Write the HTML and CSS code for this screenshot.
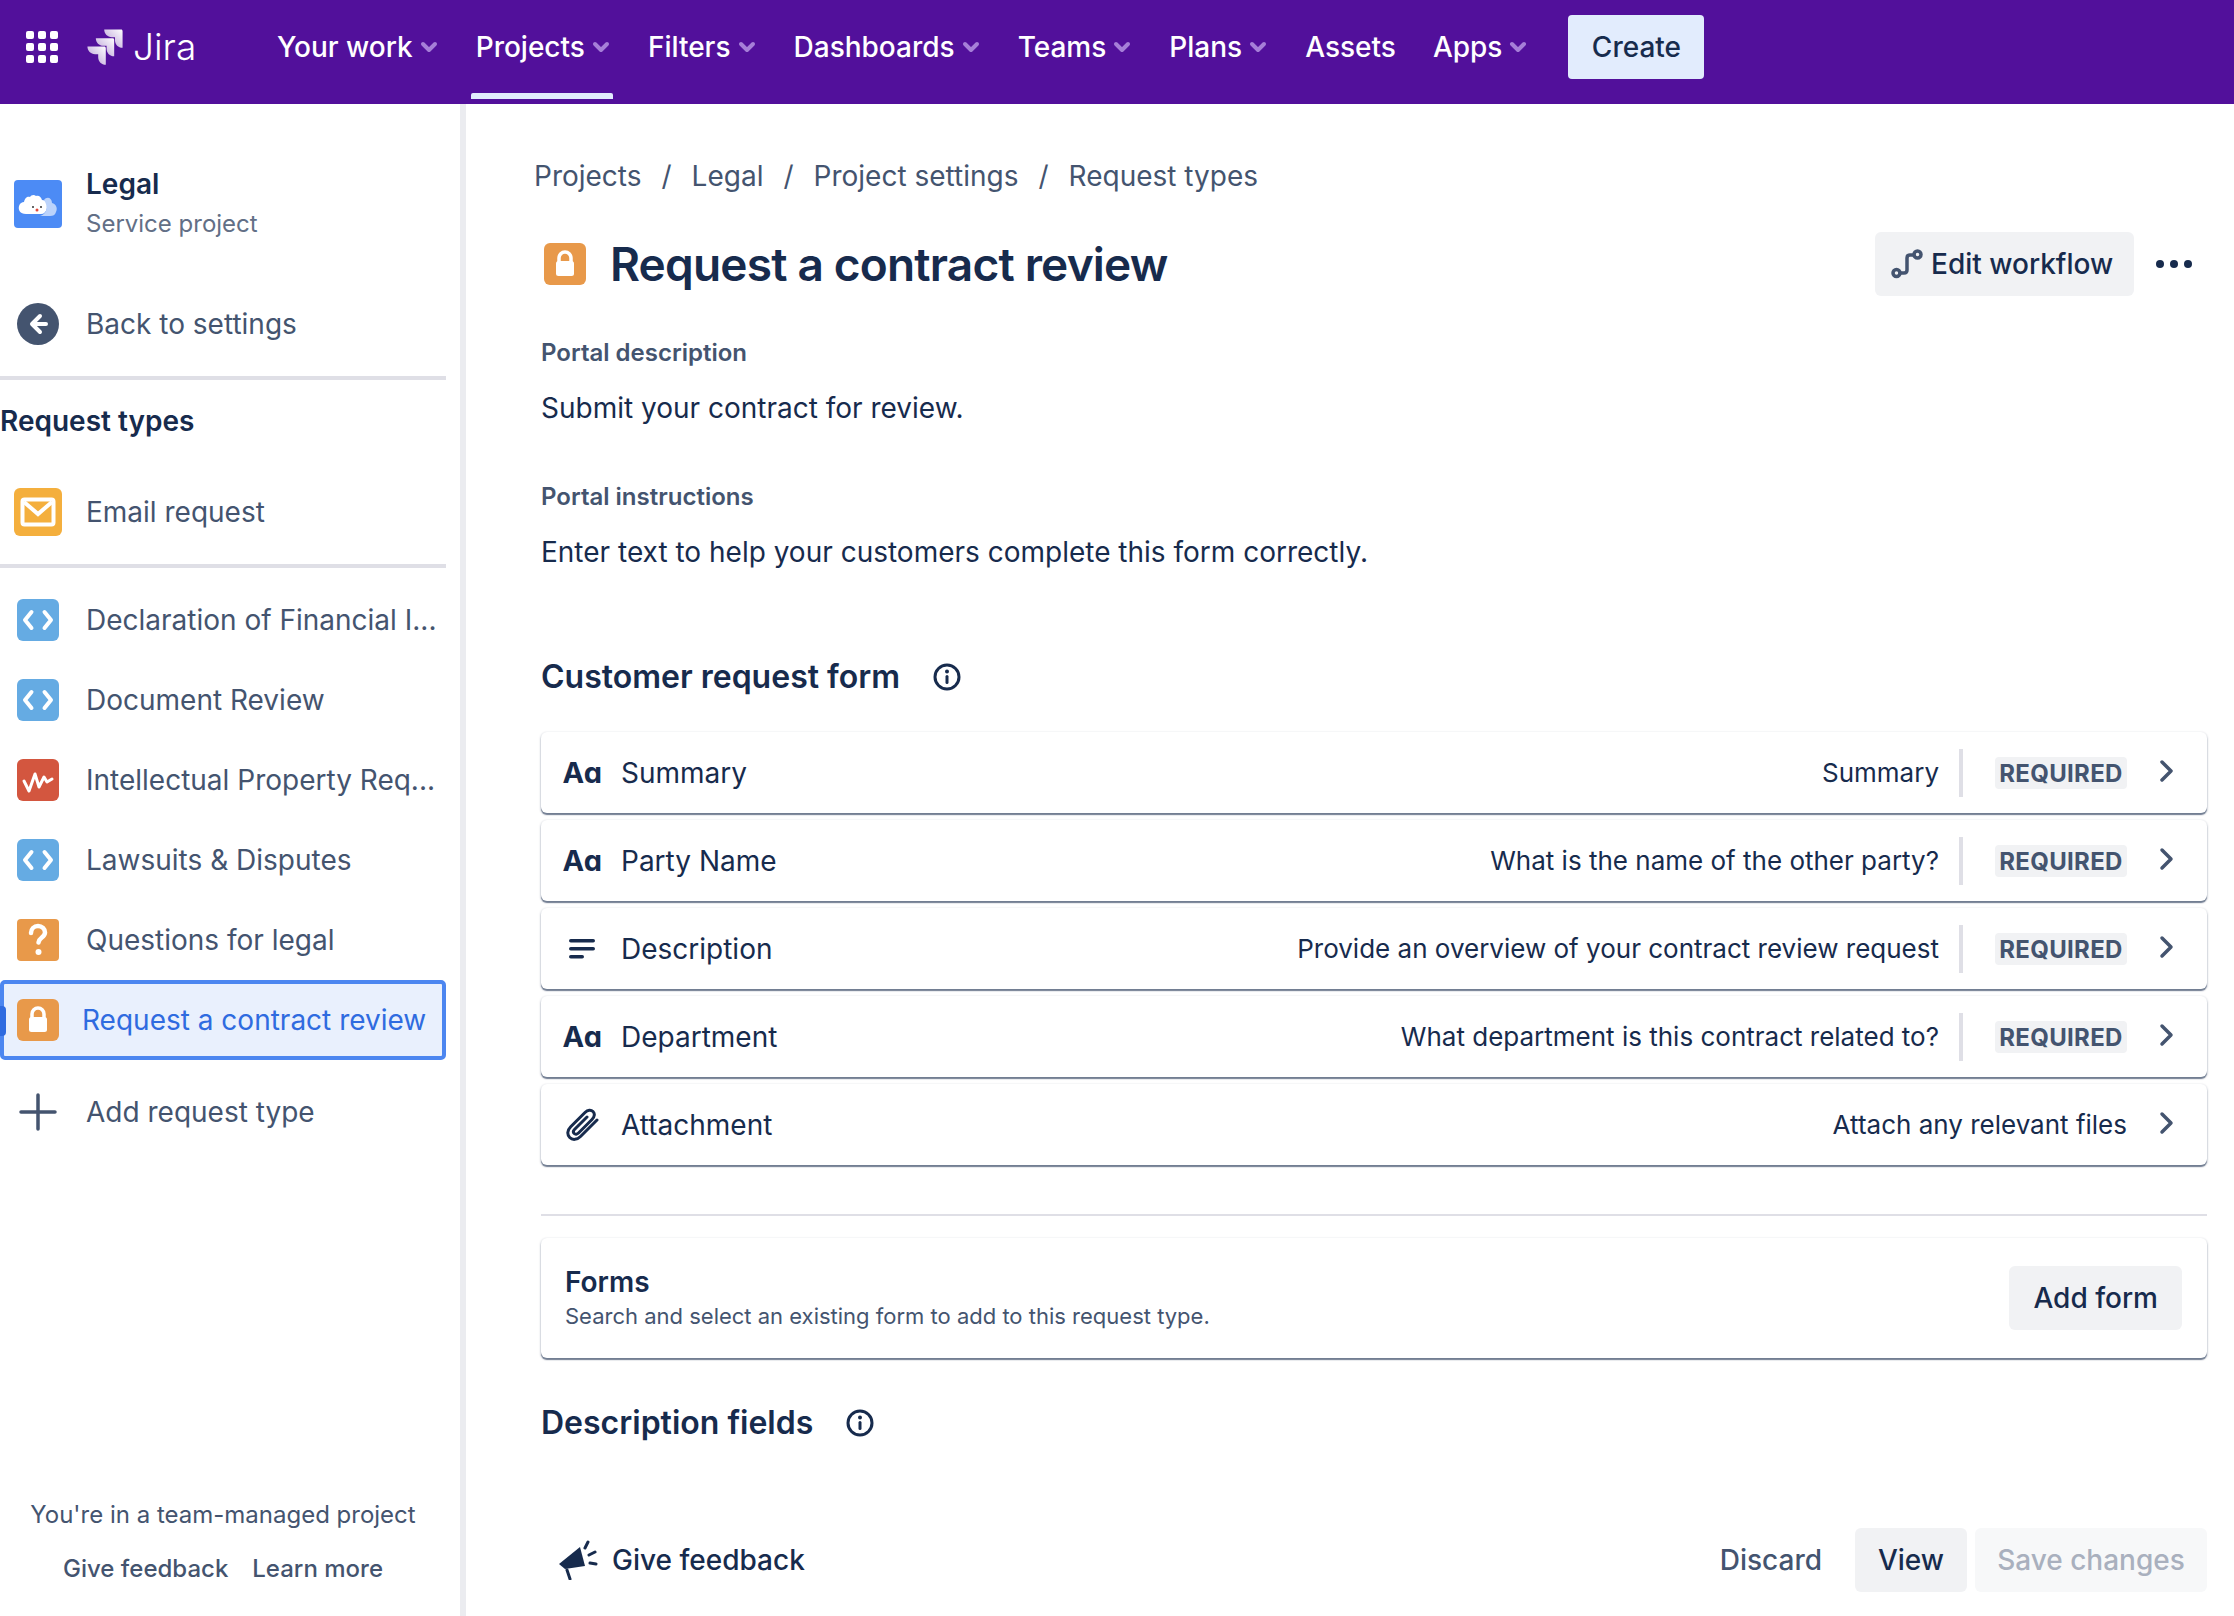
FILE: index.html
```html
<!DOCTYPE html>
<html lang="en">
<head>
    <meta charset="UTF-8">
    <title>Request a contract review - Jira</title>
    <link rel="stylesheet" href="styles.css">
</head>
<body>
    <svg class="defs" width="0" height="0">
        <defs>
            <symbol id="i-caret" viewBox="0 0 20 20"><path d="M4 7l6 6 6-6" fill="none" stroke="currentColor" stroke-width="4" stroke-linecap="round" stroke-linejoin="round"/></symbol>
            <symbol id="i-code" viewBox="0 0 42 42"><rect width="42" height="42" rx="6" fill="#65ABE3"/><path d="M14.500 13L8 21l6.500 8M27.500 13L34 21l-6.500 8" fill="none" stroke="#fff" stroke-width="4" stroke-linecap="round" stroke-linejoin="round"/></symbol>
            <symbol id="i-lock" viewBox="0 0 42 42"><rect width="42" height="42" rx="6" fill="#E8994A"/><path d="M15 19v-4a6 6 0 0 1 12 0v4" fill="none" stroke="#fff" stroke-width="3.500"/><rect x="12" y="18" width="18" height="15" rx="2.500" fill="#fff"/></symbol>
            <symbol id="i-info" viewBox="0 0 28 28"><circle cx="14" cy="14" r="12" fill="none" stroke="#172B4D" stroke-width="3"/><circle cx="14" cy="8.500" r="2" fill="#172B4D"/><rect x="12.500" y="12" width="3" height="9" rx="1.500" fill="#172B4D"/></symbol>
            <symbol id="i-next" viewBox="0 0 16 24"><path d="M3 3l9 9-9 9" fill="none" stroke="#44546F" stroke-width="3.500" stroke-linecap="round" stroke-linejoin="round"/></symbol>
            <linearGradient id="jira-fade" x1="1" y1="0" x2="0" y2="1"><stop offset="0" stop-color="#fff"/><stop offset="1" stop-color="#fff" stop-opacity=".55"/></linearGradient>
        </defs>
    </svg>

    <header class="topbar">
        <svg class="apps" width="32" height="32" viewBox="0 0 32 32" fill="#fff">
            <rect width="8" height="8" rx="2"/><rect x="12" width="8" height="8" rx="2"/><rect x="24" width="8" height="8" rx="2"/>
            <rect y="12" width="8" height="8" rx="2"/><rect x="12" y="12" width="8" height="8" rx="2"/><rect x="24" y="12" width="8" height="8" rx="2"/>
            <rect y="24" width="8" height="8" rx="2"/><rect x="12" y="24" width="8" height="8" rx="2"/><rect x="24" y="24" width="8" height="8" rx="2"/>
        </svg>
        <div class="logo">
            <svg width="40" height="38" viewBox="0 0 24 24" fill="url(#jira-fade)">
                <path d="M22.200 1H11.500c0 2.700 2.100 4.800 4.800 4.800h2v1.900c0 2.700 2.100 4.800 4.800 4.800V2c0-.6-.4-1-.9-1z"/>
                <path d="M16.900 6.400H6.200c0 2.700 2.100 4.800 4.800 4.800h2v1.900c0 2.700 2.100 4.800 4.800 4.800V7.400c0-.6-.4-1-.9-1z"/>
                <path d="M11.600 11.700H.9c0 2.700 2.100 4.800 4.800 4.800h2v1.900c0 2.700 2.100 4.800 4.800 4.800V12.700c0-.6-.4-1-.9-1z"/>
            </svg>
            <span class="logo-text">Jira</span>
        </div>
        <nav class="nav">
            <a class="nav-item">Your work <svg class="caret"><use href="#i-caret"/></svg></a>
            <a class="nav-item active">Projects <svg class="caret"><use href="#i-caret"/></svg></a>
            <a class="nav-item">Filters <svg class="caret"><use href="#i-caret"/></svg></a>
            <a class="nav-item">Dashboards <svg class="caret"><use href="#i-caret"/></svg></a>
            <a class="nav-item">Teams <svg class="caret"><use href="#i-caret"/></svg></a>
            <a class="nav-item">Plans <svg class="caret"><use href="#i-caret"/></svg></a>
            <a class="nav-item">Assets</a>
            <a class="nav-item">Apps <svg class="caret"><use href="#i-caret"/></svg></a>
            <button class="create">Create</button>
        </nav>
    </header>

    <div class="page">
        <aside class="sidebar">
            <div class="project">
                <div class="slot">
                    <svg width="48" height="48" viewBox="0 0 48 48">
                        <rect width="48" height="48" rx="4" fill="#4C8BF5"/>
                        <path d="M12 34c-6 0-8-4-7-8 1-3 3-4 5-4 1-5 4-6 6-5 1-2 4-3 6-1 3-1 5 1 6 4 4 0 6 3 5 8-1 4-3 6-6 6z" fill="#fff"/>
                        <path d="M30 20c3-4 8-2 8 3 4 1 6 5 4 9-1 3-3 4-6 4H26c6-1 9-9 4-16z" fill="#BBD3FB"/>
                        <circle cx="19" cy="27" r="1" fill="#333"/><circle cx="27" cy="27" r="1" fill="#333"/>
                        <circle cx="23" cy="30" r="1.500" fill="#E5493A"/>
                    </svg>
                </div>
                <div>
                    <div class="project-name">Legal</div>
                    <div class="project-type">Service project</div>
                </div>
            </div>

            <a class="side-row back">
                <span class="slot">
                    <svg width="42" height="42" viewBox="0 0 42 42"><circle cx="21" cy="21" r="21" fill="#44546F"/><path d="M23 13l-8 8 8 8M16 21h13" fill="none" stroke="#fff" stroke-width="4" stroke-linecap="round" stroke-linejoin="round"/></svg>
                </span>
                Back to settings
            </a>
            <div class="side-rule rule-a"></div>
            <div class="side-title">Request types</div>

            <a class="side-row email">
                <span class="slot">
                    <svg width="48" height="48" viewBox="0 0 48 48"><rect width="48" height="48" rx="6" fill="#F4AF3D"/><rect x="8.500" y="11.500" width="31" height="25" rx="2" fill="none" stroke="#fff" stroke-width="4"/><path d="M10 14l14 12 14-12" fill="none" stroke="#fff" stroke-width="4"/></svg>
                </span>
                Email request
            </a>
            <div class="side-rule rule-b"></div>

            <div class="side-list">
                <a class="side-row"><span class="slot"><svg width="42" height="42"><use href="#i-code"/></svg></span><span class="row-text">Declaration of Financial I...</span></a>
                <a class="side-row"><span class="slot"><svg width="42" height="42"><use href="#i-code"/></svg></span><span class="row-text">Document Review</span></a>
                <a class="side-row">
                    <span class="slot"><svg width="42" height="42" viewBox="0 0 42 42"><rect width="42" height="42" rx="6" fill="#D3563F"/><path d="M7 22l5 10 6-17 4 13 5-10 3 5 5-3" fill="none" stroke="#fff" stroke-width="3" stroke-linecap="round" stroke-linejoin="round"/></svg></span>
                    <span class="row-text">Intellectual Property Req...</span>
                </a>
                <a class="side-row"><span class="slot"><svg width="42" height="42"><use href="#i-code"/></svg></span><span class="row-text">Lawsuits &amp; Disputes</span></a>
                <a class="side-row">
                    <span class="slot"><svg width="42" height="42" viewBox="0 0 42 42"><rect width="42" height="42" rx="4" fill="#E8994A"/><path d="M14 14c0-4 3-7 7-7s7 3 7 6.500c0 5-6 5-6.500 10" fill="none" stroke="#fff" stroke-width="4.500" stroke-linecap="round"/><circle cx="21.500" cy="33" r="3" fill="#fff"/></svg></span>
                    <span class="row-text">Questions for legal</span>
                </a>
                <a class="side-row selected">
                    <span class="slot"><svg width="42" height="42"><use href="#i-lock"/></svg></span>
                    <span class="row-text">Request a contract review</span>
                </a>
            </div>

            <a class="side-row add">
                <span class="slot"><svg width="38" height="38" viewBox="0 0 38 38"><path d="M19 2v34M2 19h34" stroke="#44546F" stroke-width="3.500" stroke-linecap="round"/></svg></span>
                Add request type
            </a>

            <div class="side-foot">
                <div class="foot-note">You're in a team-managed project</div>
                <div class="foot-links"><a>Give feedback</a><a>Learn more</a></div>
            </div>
        </aside>

        <main class="main">
            <div class="crumbs">
                <a>Projects</a><span>/</span><a>Legal</a><span>/</span><a>Project settings</a><span>/</span><a>Request types</a>
            </div>

            <div class="title-row">
                <svg class="title-icon" width="42" height="42"><use href="#i-lock"/></svg>
                <h1>Request a contract review</h1>
                <button class="btn edit-btn">
                    <svg width="32" height="30" viewBox="0 0 32 30" fill="none" stroke="#44546F" stroke-width="3.500" stroke-linecap="round"><circle cx="5.500" cy="24" r="3.500"/><circle cx="26.500" cy="5.500" r="3.500"/><path d="M9 24h4c2 0 3-1 3-3V9c0-2 1-3 3-3h4"/></svg>
                    Edit workflow
                </button>
                <svg class="more" width="36" height="8" viewBox="0 0 36 8" fill="#172B4D"><circle cx="4" cy="4" r="4"/><circle cx="18" cy="4" r="4"/><circle cx="32" cy="4" r="4"/></svg>
            </div>

            <div class="label label-desc">Portal description</div>
            <p class="copy">Submit your contract for review.</p>
            <div class="label label-inst">Portal instructions</div>
            <p class="copy">Enter text to help your customers complete this form correctly.</p>

            <h2 class="heading heading-form">Customer request form <svg width="28" height="28"><use href="#i-info"/></svg></h2>

            <div class="fields">
                <div class="field">
                    <span class="field-icon aa">Aɑ</span><span class="field-name">Summary</span>
                    <span class="field-hint">Summary</span><span class="field-sep"></span><span class="badge">REQUIRED</span>
                    <svg class="next" width="16" height="24"><use href="#i-next"/></svg>
                </div>
                <div class="field">
                    <span class="field-icon aa">Aɑ</span><span class="field-name">Party Name</span>
                    <span class="field-hint">What is the name of the other party?</span><span class="field-sep"></span><span class="badge">REQUIRED</span>
                    <svg class="next" width="16" height="24"><use href="#i-next"/></svg>
                </div>
                <div class="field">
                    <span class="field-icon">
                        <svg width="26" height="20" viewBox="0 0 26 20" fill="#172B4D"><rect width="26" height="3.500" rx="1.750"/><rect y="8" width="26" height="3.500" rx="1.750"/><rect y="16" width="15" height="3.500" rx="1.750"/></svg>
                    </span><span class="field-name">Description</span>
                    <span class="field-hint">Provide an overview of your contract review request</span><span class="field-sep"></span><span class="badge">REQUIRED</span>
                    <svg class="next" width="16" height="24"><use href="#i-next"/></svg>
                </div>
                <div class="field">
                    <span class="field-icon aa">Aɑ</span><span class="field-name">Department</span>
                    <span class="field-hint">What department is this contract related to?</span><span class="field-sep"></span><span class="badge">REQUIRED</span>
                    <svg class="next" width="16" height="24"><use href="#i-next"/></svg>
                </div>
                <div class="field">
                    <span class="field-icon">
                        <svg width="34" height="34" viewBox="0 0 34 34" fill="none" stroke="#172B4D" stroke-width="3" stroke-linecap="round" stroke-linejoin="round"><path d="M32 12L15.500 28.500c-3.500 3.500-8 3.800-10.800 1-2.800-2.800-2.500-7.300 1-10.800L20 4.500c2.800-2.800 6-3 8-1s1.800 5.200-1 8L13.500 25c-1.400 1.400-3.200 1.600-4.300.5s-.9-2.900.5-4.300L22 9"/></svg>
                    </span><span class="field-name">Attachment</span>
                    <span class="field-hint">Attach any relevant files</span>
                    <svg class="next next-plain" width="16" height="24"><use href="#i-next"/></svg>
                </div>
            </div>

            <div class="main-rule"></div>

            <section class="forms-card">
                <div>
                    <div class="forms-title">Forms</div>
                    <div class="forms-text">Search and select an existing form to add to this request type.</div>
                </div>
                <button class="btn">Add form</button>
            </section>

            <h2 class="heading heading-desc">Description fields <svg width="28" height="28"><use href="#i-info"/></svg></h2>

            <footer class="bottom">
                <a class="feedback">
                    <svg width="40" height="40" viewBox="0 0 40 40" fill="#172B4D">
                        <path d="M1 24L22 7l5 19-20 3z"/>
                        <path d="M9 30l3 9" stroke="#172B4D" stroke-width="3" stroke-linecap="round"/>
                        <path d="M27 8l3-6M31 15l6-3M32 23l6 1" stroke="#172B4D" stroke-width="3" stroke-linecap="round"/>
                    </svg>
                    Give feedback
                </a>
                <a class="discard">Discard</a>
                <button class="btn view-btn">View</button>
                <button class="btn save-btn">Save changes</button>
            </footer>
        </main>
    </div>
</body>
</html>
```

FILE: styles.css
```css
* {
    box-sizing: border-box;
}
html, body {
    margin: 0;
    height: 100%;
}
body {
    display: flex;
    flex-direction: column;
    height: 100vh;
    overflow: hidden;
    background: #fff;
    color: #172B4D;
    font-family: Inter, "Noto Sans", sans-serif;
    font-size: 28px;
}
.defs {
    position: absolute;
}
a {
    color: inherit;
}
button {
    font-family: inherit;
    border: none;
}

/* top bar */
.topbar {
    flex: none;
    display: flex;
    align-items: center;
    height: 104px;
    padding-left: 26px;
    background: #52109B;
    color: #fff;
}
.apps {
    flex: none;
    margin-top: -10px;
}
.logo {
    display: flex;
    align-items: center;
    gap: 8px;
    width: 187px;
    margin-left: 27px;
    margin-top: -10px;
}
.logo-text {
    font-size: 37px;
    font-weight: 300;
    line-height: 40px;
}
.nav {
    display: flex;
    align-items: center;
    gap: 30px;
    height: 100%;
}
.nav-item {
    position: relative;
    display: flex;
    align-items: center;
    gap: 6px;
    height: 64px;
    margin-top: -10px;
    padding: 0 2px 0 5px;
    font-weight: 500;
    white-space: nowrap;
}
.nav-item.active::after {
    content: "";
    position: absolute;
    left: 0;
    right: 0;
    bottom: -20px;
    height: 6px;
    border-radius: 2px 2px 0 0;
    background: #E2ECFD;
}
.caret {
    width: 20px;
    height: 20px;
    color: #A67FD8;
}
.create {
    height: 64px;
    width: 136px;
    margin-top: -10px;
    margin-left: 8px;
    border-radius: 4px;
    background: #E2ECFD;
    color: #172B4D;
    font-size: 28px;
    font-weight: 500;
}

/* sidebar */
.page {
    flex: 1;
    display: flex;
    min-height: 0;
}
.sidebar {
    flex: none;
    display: flex;
    flex-direction: column;
    width: 466px;
    padding-right: 14px;
    border-right: 6px solid #EBECF0;
    color: #44546F;
}
.slot {
    flex: none;
    display: flex;
    align-items: center;
    justify-content: center;
    width: 48px;
    margin: 0 24px 0 14px;
}
.project {
    display: flex;
    align-items: center;
    height: 100px;
    margin-top: 50px;
}
.project-name {
    color: #172B4D;
    font-weight: 600;
    line-height: 40px;
}
.project-type {
    color: #626F86;
    font-size: 24px;
    line-height: 40px;
}
.side-row {
    position: relative;
    display: flex;
    align-items: center;
    height: 80px;
    white-space: nowrap;
}
.back {
    height: 60px;
    margin-top: 40px;
}
.side-rule {
    flex: none;
    height: 4px;
    background: #DFDFE6;
}
.rule-a {
    margin-top: 22px;
}
.rule-b {
    margin-top: 12px;
}
.side-title {
    margin-top: 21px;
    color: #172B4D;
    font-weight: 600;
    line-height: 40px;
}
.email {
    margin-top: 31px;
}
.side-list {
    margin-top: 12px;
}
.selected {
    border: 4px solid #4C86F0;
    border-radius: 5px;
    background: #E9F0FD;
    color: #2F6BE0;
}
.selected .slot {
    margin-left: 10px;
    margin-right: 20px;
}
.selected::before {
    content: "";
    position: absolute;
    left: -4px;
    top: 22px;
    width: 6px;
    height: 30px;
    border-radius: 0 4px 4px 0;
    background: #2F6BE0;
}
.add {
    margin-top: 12px;
}
.side-foot {
    margin-top: auto;
    padding-bottom: 27px;
    text-align: center;
}
.foot-note {
    font-size: 24px;
    line-height: 40px;
}
.foot-links {
    display: flex;
    justify-content: center;
    gap: 24px;
    margin-top: 14px;
    font-size: 24px;
    font-weight: 500;
    line-height: 40px;
}

/* main column */
.main {
    flex: 1;
    display: flex;
    flex-direction: column;
    min-width: 0;
    padding: 52px 27px 24px 75px;
}
.crumbs {
    display: flex;
    gap: 20px;
    margin-left: -7px;
    color: #44546F;
    line-height: 40px;
}
.title-row {
    display: flex;
    align-items: center;
    height: 64px;
    margin-top: 36px;
}
.title-icon {
    flex: none;
    margin-left: 3px;
    margin-right: 24px;
}
h1 {
    flex: 1;
    margin: 0;
    font-size: 46px;
    font-weight: 600;
    letter-spacing: -0.8px;
}
.btn {
    height: 64px;
    padding: 0 24px;
    border-radius: 6px;
    background: #F1F2F4;
    color: #172B4D;
    font-size: 28px;
    font-weight: 500;
}
.edit-btn {
    display: flex;
    align-items: center;
    gap: 8px;
    width: 259px;
    padding: 0 16px;
}
.more {
    margin: 0 15px 0 22px;
}
.label {
    color: #44546F;
    font-size: 24px;
    font-weight: 600;
    line-height: 36px;
}
.label-desc {
    margin-top: 39px;
}
.label-inst {
    margin-top: 51px;
}
.copy {
    margin: 17px 0 0;
    line-height: 40px;
}
.heading {
    display: flex;
    align-items: center;
    gap: 33px;
    margin: 0;
    font-size: 32px;
    font-weight: 600;
    line-height: 40px;
}
.heading-form {
    margin-top: 85px;
}
.heading-desc {
    margin-top: 45px;
}

/* field cards */
.fields {
    display: flex;
    flex-direction: column;
    gap: 7px;
    margin-top: 35px;
}
.field, .forms-card {
    display: flex;
    align-items: center;
    border-radius: 6px;
    background: #fff;
    box-shadow: 0 1px 2px 1px rgba(9, 30, 66, 0.14), 0 2px 1px rgba(9, 30, 66, 0.5);
}
.field {
    height: 81px;
    padding-left: 23px;
}
.field-icon {
    flex: none;
    display: flex;
    align-items: center;
    justify-content: center;
    width: 36px;
    margin-right: 21px;
}
.aa {
    font-size: 29px;
    font-weight: 700;
    letter-spacing: -0.5px;
}
.field-name {
    flex: 1;
}
.field-hint {
    font-size: 26px;
}
.field-sep {
    flex: none;
    width: 4px;
    height: 48px;
    margin: 0 32px 0 20px;
    background: #DFDFE6;
}
.badge {
    flex: none;
    width: 132px;
    height: 32px;
    border-radius: 4px;
    background: #F1F2F4;
    color: #44546F;
    font-size: 24px;
    font-weight: 700;
    line-height: 34px;
    text-align: center;
    letter-spacing: 0.3px;
}
.next {
    flex: none;
    margin: -4px 32px 0 32px;
}
.main-rule {
    height: 2px;
    margin-top: 49px;
    background: #DFDFE6;
}
.forms-card {
    justify-content: space-between;
    height: 120px;
    margin-top: 22px;
    padding: 0 25px 0 24px;
}
.forms-title {
    font-weight: 600;
    line-height: 36px;
}
.forms-text {
    color: #44546F;
    font-size: 22px;
    line-height: 32px;
}

/* save bar */
.bottom {
    display: flex;
    align-items: center;
    margin-top: auto;
}
.feedback {
    display: flex;
    align-items: center;
    gap: 14px;
    margin-left: 17px;
    margin-right: auto;
    font-weight: 500;
}
.discard {
    margin-right: 33px;
    color: #44546F;
    font-weight: 500;
}
.view-btn {
    width: 112px;
    padding: 0;
}
.save-btn {
    width: 232px;
    margin-left: 8px;
    padding: 0;
    background: #F7F8F9;
    color: #A9B0BE;
}
```
